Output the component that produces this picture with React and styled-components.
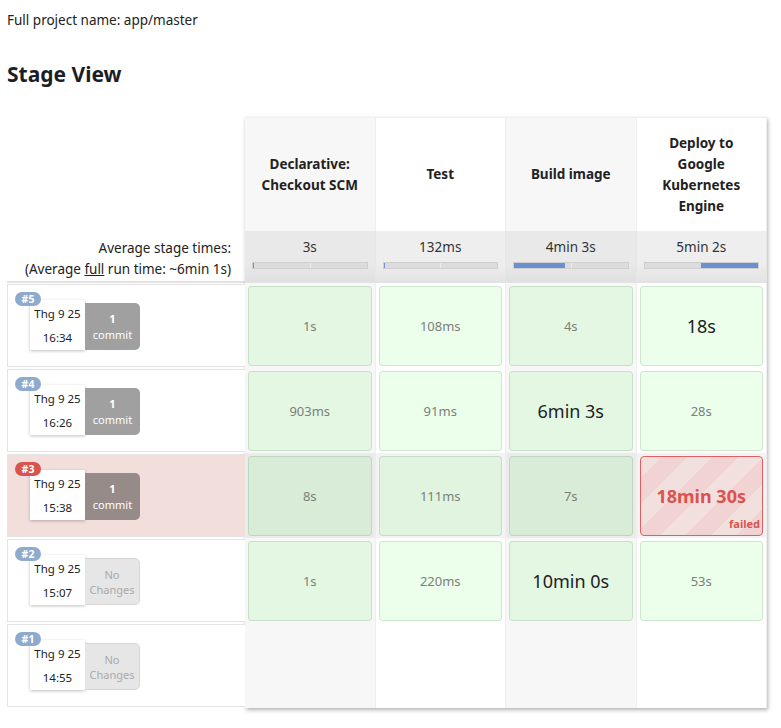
import React from 'react';
import styled, { createGlobalStyle, css } from 'styled-components';

const GlobalStyle = createGlobalStyle`
  body {
    margin: 0;
    font-family: "Noto Sans", "Open Sans", sans-serif;
    color: #222;
    background: #fff;
  }
`;

const Page = styled.div`
  padding: 11px 7px 20px 7px;
`;

const ProjectName = styled.div`
  font-size: 13.5px;
  line-height: 18px;
`;

const Heading = styled.h2`
  margin: 32px 0 0 0;
  font-size: 21px;
  line-height: 26px;
  font-weight: 700;
  color: #1d1d25;
`;

const ViewWrap = styled.div`
  display: flex;
  margin-top: 30px;
`;

const LeftColumn = styled.div`
  width: 238px;
  display: flex;
  flex-direction: column;
`;

const HeaderSpacer = styled.div`
  height: 114px;
`;

const AverageLabel = styled.div`
  height: 52px;
  box-sizing: border-box;
  border-bottom: 2px solid #e2e2e2;
  padding: 7px 14px 0 0;
  text-align: right;
  font-size: 13.5px;
  line-height: 21px;
  u {
    text-decoration: underline;
  }
`;

const LeftCell = styled.div`
  position: relative;
  height: 83px;
  box-sizing: border-box;
  border: 1px solid #e4e4e4;
  border-right: none;
  margin: 1px 0 1px 0;
  padding: 15px 0 0 22px;
  background: ${(p) => (p.$failed ? '#f2dedb' : '#fff')};
`;

const Badge = styled.span`
  position: absolute;
  top: 7px;
  left: 7px;
  z-index: 1;
  width: 26px;
  height: 14px;
  border-radius: 8px;
  background: ${(p) => (p.$failed ? '#d9534f' : '#8eabce')};
  color: #fff;
  font-size: 10.5px;
  font-weight: 700;
  line-height: 14px;
  text-align: center;
`;

const BuildCard = styled.div`
  display: flex;
  align-items: flex-start;
`;

const DateCard = styled.div`
  width: 55px;
  height: 50px;
  background: #fff;
  box-shadow: 0 1px 3px rgba(0, 0, 0, 0.25);
  font-size: 11.5px;
  line-height: 24px;
  text-align: center;
  white-space: nowrap;
  padding-top: 2px;
  box-sizing: border-box;
`;

const ChangeBox = styled.div`
  width: 55px;
  height: 47px;
  margin-top: 3px;
  box-sizing: border-box;
  border-radius: 0 5px 5px 0;
  display: flex;
  flex-direction: column;
  justify-content: center;
  align-items: center;
  text-align: center;
  font-size: 11px;
  line-height: 16px;
  ${(p) =>
    p.$empty
      ? css`
          background: #e6e6e6;
          border: 1px solid #d6d6d6;
          border-left: none;
          color: #a9a9a9;
          font-size: 11px;
          line-height: 15px;
        `
      : css`
          background: ${p.$failed ? '#968b89' : '#a0a0a0'};
          color: #fff;
          b {
            font-weight: 700;
          }
        `}
`;

const StageTable = styled.div`
  width: 522px;
  display: grid;
  grid-template-columns: repeat(4, 1fr);
  grid-auto-rows: auto;
  box-shadow: 1px 2px 4px rgba(0, 0, 0, 0.3);
`;

const HeaderCell = styled.div`
  height: 114px;
  box-sizing: border-box;
  display: flex;
  align-items: center;
  justify-content: center;
  text-align: center;
  padding: 0 10px 0 10px;
  font-size: 13.5px;
  font-weight: 700;
  line-height: 21px;
  background: ${(p) => (p.$odd ? '#f7f7f7' : '#fff')};
  border-right: 1px solid #eee;
  border-top: 1px solid #f0f0f0;
`;

const AverageCell = styled.div`
  height: 52px;
  box-sizing: border-box;
  padding: 6px 7px 0 7px;
  background: ${(p) =>
    p.$odd
      ? 'linear-gradient(#e9e9e9 65%, #e0e0e0)'
      : 'linear-gradient(#eeeeee 65%, #e4e4e4)'};
  border-right: 1px solid #e6e6e6;
  border-bottom: 2px solid #e2e2e2;
  text-align: center;
  font-size: 13.5px;
  line-height: 21px;
  color: #333;
`;

const Bar = styled.div`
  position: relative;
  height: 5px;
  margin-top: 4px;
  background: #dcdcdc;
  border: 1px solid #cfcfcf;
  &::after {
    content: '';
    position: absolute;
    left: 50%;
    top: 0;
    bottom: 0;
    width: 1px;
    background: #ececec;
  }
`;

const BarFill = styled.span`
  position: absolute;
  top: 0;
  bottom: 0;
  z-index: 1;
  background: #6b90d0;
`;

const StageCell = styled.div`
  height: 85px;
  box-sizing: border-box;
  padding: 3px 3px 2px 3px;
  background: ${(p) =>
    p.$highlight ? (p.$odd ? '#ebebeb' : '#f3f3f3') : p.$odd ? '#f7f7f7' : '#fff'};
  border-right: 1px solid #eee;
`;

const StageBox = styled.div`
  height: 100%;
  box-sizing: border-box;
  position: relative;
  border-radius: 4px;
  display: flex;
  align-items: center;
  justify-content: center;
  ${(p) =>
    p.$failed
      ? css`
          border: 1px solid #e06060;
          background: repeating-linear-gradient(
            -45deg,
            #f2d3d3 0px,
            #f2d3d3 18px,
            #f2e0de 18px,
            #f2e0de 36px
          );
          color: #d9534f;
          font-weight: 700;
        `
      : css`
          border: 1px solid rgba(0, 60, 0, 0.12);
          background: rgba(0, 255, 0, 0.08);
          color: #222;
        `}
`;

const Duration = styled.span`
  font-size: ${(p) => (p.$long ? '18px' : '13px')};
  color: ${(p) => (p.$long ? 'inherit' : '#7b807b')};
  ${(p) =>
    p.$failed &&
    css`
      color: #d9534f;
    `}
`;

const FailedTag = styled.span`
  position: absolute;
  right: 2px;
  bottom: 5px;
  font-size: 11px;
  line-height: 13px;
  font-weight: 700;
  color: #d9534f;
`;

const stages = [
  { name: ['Declarative:', 'Checkout SCM'], avg: '3s', bar: [0, 1] },
  { name: ['Test'], avg: '132ms', bar: [0, 1] },
  { name: ['Build image'], avg: '4min 3s', bar: [0, 45] },
  { name: ['Deploy to', 'Google', 'Kubernetes', 'Engine'], avg: '5min 2s', bar: [50, 50] },
];

const builds = [
  { id: 5, date: 'Thg 9 25', time: '16:34', commits: 1, stages: [['1s'], ['108ms'], ['4s'], ['18s', true]] },
  { id: 4, date: 'Thg 9 25', time: '16:26', commits: 1, stages: [['903ms'], ['91ms'], ['6min 3s', true], ['28s']] },
  { id: 3, date: 'Thg 9 25', time: '15:38', commits: 1, failed: true, stages: [['8s'], ['111ms'], ['7s'], ['18min 30s', true, true]] },
  { id: 2, date: 'Thg 9 25', time: '15:07', commits: 0, stages: [['1s'], ['220ms'], ['10min 0s', true], ['53s']] },
  { id: 1, date: 'Thg 9 25', time: '14:55', commits: 0, stages: [] },
];

const App = () => {
  return (
    <Page>
      <GlobalStyle />
      <ProjectName>Full project name: app/master</ProjectName>
      <Heading>Stage View</Heading>
      <ViewWrap>
        <LeftColumn>
          <HeaderSpacer />
          <AverageLabel>
            Average stage times:
            <br />
            (Average <u>full</u> run time: ~6min 1s)
          </AverageLabel>
          {builds.map((b) => (
            <LeftCell key={b.id} $failed={b.failed}>
              <Badge $failed={b.failed}>#{b.id}</Badge>
              <BuildCard>
                <DateCard>
                  {b.date}
                  <br />
                  {b.time}
                </DateCard>
                {b.commits ? (
                  <ChangeBox $failed={b.failed}>
                    <b>{b.commits}</b>
                    commit
                  </ChangeBox>
                ) : (
                  <ChangeBox $empty>
                    <span>No</span>
                    <span>Changes</span>
                  </ChangeBox>
                )}
              </BuildCard>
            </LeftCell>
          ))}
        </LeftColumn>
        <StageTable>
          {stages.map((s, i) => (
            <HeaderCell key={s.avg} $odd={i % 2 === 0}>
              <span>
                {s.name.map((line, j) => (
                  <React.Fragment key={line}>
                    {j > 0 && <br />}
                    {line}
                  </React.Fragment>
                ))}
              </span>
            </HeaderCell>
          ))}
          {stages.map((s, i) => (
            <AverageCell key={s.avg} $odd={i % 2 === 0}>
              {s.avg}
              <Bar>
                <BarFill style={{ left: `${s.bar[0]}%`, width: `${s.bar[1]}%` }} />
              </Bar>
            </AverageCell>
          ))}
          {builds.map((b) =>
            stages.map((s, i) => {
              const st = b.stages[i];
              return (
                <StageCell key={`${b.id}-${i}`} $odd={i % 2 === 0} $highlight={b.failed}>
                  {st && (
                    <StageBox $failed={st[2]}>
                      <Duration $long={st[1]} $failed={st[2]}>
                        {st[0]}
                      </Duration>
                      {st[2] && <FailedTag>failed</FailedTag>}
                    </StageBox>
                  )}
                </StageCell>
              );
            })
          )}
        </StageTable>
      </ViewWrap>
    </Page>
  );
};

export default App;
